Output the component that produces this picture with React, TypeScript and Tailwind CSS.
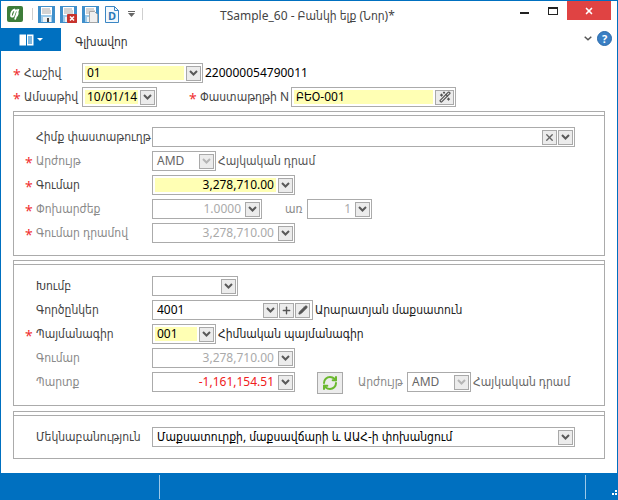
import React from 'react';
import { Pencil, Plus, RefreshCw, WandSparkles, X } from 'lucide-react';

const FONT = "font-['Noto_Sans','DejaVu_Sans_Condensed','DejaVu_Sans',sans-serif]";

function Chevron({ light = false }: { light?: boolean }) {
  return (
    <svg width="9" height="6" viewBox="0 0 9 6" fill="none">
      <path d="M1 1l3.5 3.5L8 1" stroke={light ? '#b5b5b5' : '#5a5a5a'} strokeWidth="2" />
    </svg>
  );
}

function Btn({ children, className = 'w-[15px]' }: { children?: React.ReactNode; className?: string }) {
  return (
    <span className={`${className} h-[15px] shrink-0 flex items-center justify-center border border-[#a9a9a9] bg-[#ececec]`}>
      {children ?? <Chevron />}
    </span>
  );
}

function Field({
  w,
  value,
  fill = '',
  tone = 'text-black',
  right = false,
  extra,
  noChevron = false,
  lightChevron = false,
}: {
  w: string;
  value?: string;
  fill?: string;
  tone?: string;
  right?: boolean;
  extra?: React.ReactNode;
  noChevron?: boolean;
  lightChevron?: boolean;
}) {
  return (
    <div className={`${w} h-[20px] shrink-0 border border-[#ababab] bg-white flex items-center pl-[2px] pr-[1px] gap-[1px]`}>
      <span className={`flex-1 h-[14px] min-w-0 mr-[1px] flex items-center px-[2px] whitespace-nowrap text-[12px] leading-none ${fill} ${tone} ${right ? 'justify-end' : ''}`}>
        {value}
      </span>
      {extra}
      {!noChevron && <Btn>{lightChevron ? <Chevron light /> : undefined}</Btn>}
    </div>
  );
}

function Label({ text, star = false, muted = false, width = 'w-[115px]' }: { text: string; star?: boolean; muted?: boolean; width?: string }) {
  return (
    <div className={`${width} shrink-0 flex items-center`}>
      <span className="w-[11px] text-[#f03030] text-[14px] leading-none pt-[3px]">{star ? '*' : ''}</span>
      <span className={`text-[12px] whitespace-nowrap ${muted ? 'text-[#8a8a8a]' : 'text-[#444]'}`}>{text}</span>
    </div>
  );
}

function Section({ className, children }: { className: string; children: React.ReactNode }) {
  return (
    <section className={`mx-[12px] border border-[#ababab] ${className}`}>
      <div className="h-[4px] border-b border-[#ababab]" />
      <div className="pl-[11px] pt-[11px] flex flex-col gap-[4px]">{children}</div>
    </section>
  );
}

function Floppy({ badge = false, faded = false }: { badge?: boolean; faded?: boolean }) {
  return (
    <svg width="17" height="17" viewBox="0 0 17 17">
      <rect x="0.5" y="0.5" width="16" height="16" fill="#9ecbea" stroke="#3f8fcb" />
      <rect x="1" y="1" width="2" height="15" fill="#3f8fcb" />
      <rect x="14" y="1" width="2" height="15" fill="#3f8fcb" />
      <rect x="3" y="1" width="11" height="8" fill="#fff" />
      <path d="M4 3h8M4 5h9M4 7h9" stroke="#a8a8a8" />
      <rect x="5" y="11" width="8" height="5" fill="#eef2f5" />
      <rect x="9" y="12" width="2" height="4" fill="#444" />
      {faded && <path d="M7.500 5.500h5l3 3v8h-8z" fill="#efefef" stroke="#a5a5a5" />}
      {badge && (
        <g>
          <rect x="7" y="8" width="10" height="9" rx="1" fill="#c8322c" />
          <path d="M10 10.500l4 4M14 10.500l-4 4" stroke="#fff" strokeWidth="1.500" />
        </g>
      )}
    </svg>
  );
}

export default function App() {
  return (
    <div className={`${FONT} w-[618px] h-[500px] flex flex-col bg-white border-x border-t border-[#0070c0] overflow-hidden`}>
      {/* title bar */}
      <div className="h-[27px] shrink-0 flex items-start">
        <div className="flex items-center h-[26px] pl-[6px]">
          <svg width="16" height="16" viewBox="0 0 16 16">
            <rect width="16" height="16" rx="2" fill="#3d7d3a" />
            <path d="M8 3.500C5.500 3.500 4 7 4 9.500c0 1.500 1.500 1.500 2.500.5L8.800 3.500M11.500 3l-3.500 10.500M8.800 4c1.500.5 3 2 1 6" fill="none" stroke="#fff" strokeWidth="1.800" />
          </svg>
          <span className="w-px h-[12px] bg-[#cfcfcf] ml-[9px] mr-[5px]" />
          <span className="flex items-center gap-[5px]">
            <Floppy />
            <Floppy badge />
            <Floppy faded />
            <span className="ml-[1px] relative w-[14px] h-[17px] flex items-center justify-center">
              <svg width="14" height="17" viewBox="0 0 14 17" className="absolute inset-0">
                <path d="M.5.500h9l4 4v12H.5z" fill="#f3f8fc" stroke="#3a86c4" />
                <path d="M9.500.500v4h4" fill="none" stroke="#3a86c4" />
              </svg>
              <span className="relative pt-[3px] text-[11px] font-bold text-[#2a78b8] leading-none">D</span>
            </span>
          </span>
          <span className="ml-[9px] flex flex-col items-center gap-[1px]">
            <span className="w-[7px] h-px bg-[#666]" />
            <svg width="7" height="4" viewBox="0 0 7 4"><path d="M0 0h7L3.500 4z" fill="#666" /></svg>
          </span>
          <span className="w-px h-[12px] bg-[#cfcfcf] ml-[7px]" />
        </div>
        <div className="ml-[77px] pt-[6px] text-[12px] text-[#444] whitespace-nowrap w-[300px]">TSample_60 - Բանկի ելք (Նոր)*</div>
        <div className="flex items-start">
          <span className="mt-[11px] w-[9px] h-[2px] bg-[#222]" />
          <span className="ml-[19px] mt-[6px] w-[10px] h-[8px] border border-[#222] border-t-2" />
          <span className="ml-[9px] w-[44px] h-[19px] bg-[#e04343] flex items-center justify-center">
            <X size={10} strokeWidth={4} className="text-white" />
          </span>
        </div>
      </div>

      {/* tab row */}
      <div className="h-[23px] shrink-0 flex items-center">
        <div className="w-[60px] h-[23px] bg-[#0070c0] flex items-center justify-center gap-[3px]">
          <svg width="15" height="12" viewBox="0 0 15 12">
            <rect x="0.500" y="0.500" width="14" height="11" fill="#fff" />
            <path d="M7.500 0v12M9 3h4M9 5h4M9 7h4M9 9h4" stroke="#0070c0" />
          </svg>
          <svg width="6" height="3" viewBox="0 0 6 3"><path d="M0 0h6L3 3z" fill="#fff" /></svg>
        </div>
        <span className="ml-[14px] pt-[5px] text-[12px] text-[#333]">Գլխավոր</span>
        <span className="ml-auto mr-[5px] mb-[2px] flex items-center gap-[5px]">
          <svg width="8" height="5" viewBox="0 0 8 5" fill="none"><path d="M.7.7l3.3 3 3.3-3" stroke="#555" strokeWidth="1.500" /></svg>
          <span className="w-[15px] h-[15px] rounded-full bg-[#3a7fc4] border border-[#2a6aaa] text-white text-[11px] font-bold leading-none flex items-center justify-center">?</span>
        </span>
      </div>

      {/* header fields */}
      <div className="pl-[12px] pt-[12px] flex flex-col gap-[4px]">
        <div className="flex items-center h-[20px]">
          <Label text="Հաշիվ" star width="w-[69px]" />
          <Field w="w-[121px]" value="01" fill="bg-[#ffffb4]" />
          <span className="ml-[2px] text-[12px] text-black">220000054790011</span>
        </div>
        <div className="flex items-center h-[20px]">
          <Label text="Ամսաթիվ" star width="w-[69px]" />
          <Field w="w-[75px]" value="10/01/14" fill="bg-[#ffffb4]" />
          <span className="ml-[32px]">
            <Label text="Փաստաթղթի N" star width="w-[102px]" />
          </span>
          <Field w="w-[165px]" value="ԲԵՕ-001" fill="bg-[#ffffb4]" noChevron extra={
            <Btn className="w-[19px]"><WandSparkles size={12} strokeWidth={2.500} className="text-[#555]" /></Btn>
          } />
        </div>
      </div>

      <Section className="mt-[4px] h-[145px]">
        <div className="flex items-center">
          <Label text="Հիմք փաստաթուղթ" width="w-[127px]" />
          <Field w="w-[423px]" extra={<Btn><X size={11} strokeWidth={3} className="text-[#666]" /></Btn>} />
        </div>
        <div className="flex items-center">
          <Label text="Արժույթ" star muted width="w-[127px]" />
          <Field w="w-[64px]" value="AMD" tone="text-[#666]" lightChevron />
          <span className="ml-[2px] text-[12px] text-[#555]">Հայկական դրամ</span>
        </div>
        <div className="flex items-center">
          <Label text="Գումար" star width="w-[127px]" />
          <Field w="w-[143px]" value="3,278,710.00" fill="bg-[#ffffb4]" right />
        </div>
        <div className="flex items-center">
          <Label text="Փոխարժեք" star muted width="w-[127px]" />
          <Field w="w-[110px]" value="1.0000" tone="text-[#aaa]" right />
          <span className="ml-[23px] w-[22px] text-[12px] text-[#8a8a8a]">առ</span>
          <Field w="w-[65px]" value="1" tone="text-[#aaa]" right />
        </div>
        <div className="flex items-center">
          <Label text="Գումար դրամով" star muted width="w-[127px]" />
          <Field w="w-[143px]" value="3,278,710.00" tone="text-[#aaa]" right />
        </div>
      </Section>

      <Section className="mt-[4px] h-[146px]">
        <div className="flex items-center">
          <Label text="Խումբ" width="w-[127px]" />
          <Field w="w-[86px]" />
        </div>
        <div className="flex items-center">
          <Label text="Գործընկեր" width="w-[127px]" />
          <Field w="w-[161px]" value="4001" noChevron />
          <span className="-ml-[50px] flex gap-[1px] pr-[2px]">
            <Btn />
            <Btn><Plus size={11} strokeWidth={3} className="text-[#555]" /></Btn>
            <Btn><Pencil size={10} fill="#555" className="text-[#555]" /></Btn>
          </span>
          <span className="ml-[3px] text-[12px] text-[#222] whitespace-nowrap">Արարատյան մաքսատուն</span>
        </div>
        <div className="flex items-center">
          <Label text="Պայմանագիր" star width="w-[127px]" />
          <Field w="w-[64px]" value="001" fill="bg-[#ffffb4]" />
          <span className="ml-[2px] text-[12px] text-[#222]">Հիմնական պայմանագիր</span>
        </div>
        <div className="flex items-center">
          <Label text="Գումար" muted width="w-[127px]" />
          <Field w="w-[143px]" value="3,278,710.00" tone="text-[#aaa]" right />
        </div>
        <div className="flex items-center">
          <Label text="Պարտք" muted width="w-[127px]" />
          <Field w="w-[143px]" value="-1,161,154.51" tone="text-[#f02020]" right />
          <span className="ml-[22px] w-[26px] h-[22px] -mb-[2px] border border-[#a9a9a9] bg-[#ececec] flex items-center justify-center">
            <RefreshCw size={16} strokeWidth={3} className="text-[#6ab82e]" />
          </span>
          <span className="ml-[15px] w-[49px] text-[12px] text-[#8a8a8a]">Արժույթ</span>
          <Field w="w-[64px]" value="AMD" tone="text-[#666]" lightChevron />
          <span className="ml-[2px] text-[12px] text-[#666] whitespace-nowrap">Հայկական դրամ</span>
        </div>
      </Section>

      <Section className="mt-[5px] h-[48px]">
        <div className="flex items-center">
          <Label text="Մեկնաբանություն" width="w-[127px]" />
          <Field w="w-[423px]" value="Մաքսատուրքի, մաքսավճարի և ԱԱՀ-ի փոխանցում" />
        </div>
      </Section>

      {/* status bar */}
      <div className="mt-auto h-[27px] -mx-px shrink-0 bg-[#0070c0] flex items-center">
        <span className="ml-[159px] w-px h-[24px] bg-[#9cc8e8]" />
        <span className="ml-[425px] w-px h-[24px] bg-[#9cc8e8]" />
        <span className="ml-auto mr-[1px] mt-[12px] grid grid-cols-3 gap-px w-[8px]">
          <span /><span /><span className="w-[2px] h-[2px] bg-white" />
          <span /><span className="w-[2px] h-[2px] bg-white" /><span className="w-[2px] h-[2px] bg-white" />
        </span>
      </div>
    </div>
  );
}
